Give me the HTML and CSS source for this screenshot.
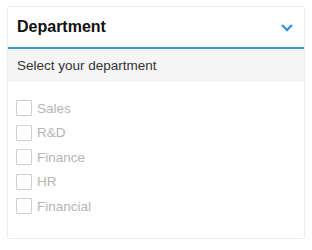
FILE: index.html
```html
<!DOCTYPE html>
<html lang="en">
<head>
    <meta charset="UTF-8">
    <title>Department</title>
    <link rel="stylesheet" href="styles.css">
</head>
<body>

<div class="panel">
    <div class="panel-header">
        <span class="panel-title">Department</span>
        <svg class="chevron" width="14" height="9" viewBox="0 0 14 9">
            <path d="M2 2 L7 7 L12 2" fill="none" stroke="#3a94d4" stroke-width="2.4"/>
        </svg>
    </div>
    <div class="panel-hint">Select your department</div>
    <ul class="option-list">
        <li><span class="box"></span>Sales</li>
        <li><span class="box"></span>R&amp;D</li>
        <li><span class="box"></span>Finance</li>
        <li><span class="box"></span>HR</li>
        <li><span class="box"></span>Financial</li>
    </ul>
</div>

</body>
</html>
```
FILE: styles.css
```css
body {
    margin: 0;
    background-color: #ffffff;
    font-family: "Liberation Sans", Arial, sans-serif;
}

.panel {
    margin: 6px 7px 0 7px;
    height: 231px;
    border: 1px solid #ececec;
    border-radius: 2px;
    background-color: white;
}

.panel-header {
    height: 40px;
    border-bottom: 2px solid #3a9ad9; /* mavi çizgi */
    display: flex;
    align-items: center;
    justify-content: space-between;
    padding: 0 10px 0 9px;
}

.panel-title {
    font-size: 16px;
    font-weight: bold;
    color: #111;
}

.chevron {
    margin-top: 1px;
}

.panel-hint {
    background-color: #f5f5f5;
    height: 33px;
    line-height: 33px;
    padding-left: 9px;
    font-size: 13.5px;
    color: #333;
}

.option-list {
    list-style-type: none;
    margin: 0;
    padding: 14px 0 0 8px;
}

.option-list li {
    display: flex;
    align-items: center;
    height: 24.5px;
    font-size: 13.5px;
    color: #b5b5b5;
}

.box {
    width: 16px;
    height: 16px;
    border: 1px solid #cfcfcf;
    border-radius: 1px;
    margin-right: 5px;
    box-sizing: border-box;
    flex-shrink: 0;
}
```
